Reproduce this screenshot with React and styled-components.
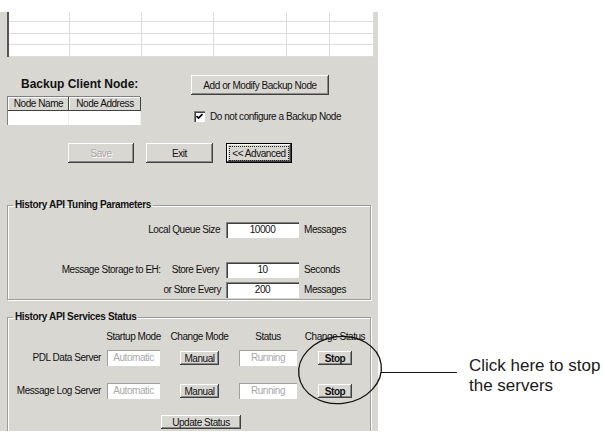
import React from "react";
import styled, { createGlobalStyle } from "styled-components";

const GlobalStyle = createGlobalStyle`
  body {
    margin: 0;
    background: #fff;
    font-family: "Liberation Sans", Arial, sans-serif;
  }
`;

const FACE = "#d9d7d2";

const Page = styled.div`
  position: relative;
  display: flex;
  align-items: flex-start;
  width: 605px;
  height: 435px;
  overflow: hidden;
`;

const Panel = styled.div`
  box-sizing: border-box;
  width: 378px;
  height: 419px;
  margin-top: 12px;
  padding-left: 7px;
  background: ${FACE};
  overflow: hidden;
  font-size: 10px;
  letter-spacing: -0.45px;
  color: #111;
`;

const ListGrid = styled.div`
  display: grid;
  grid-template-columns: 61px 72px 72px 73px 43px 44px;
  grid-template-rows: 10px 12px 11px 12px;
  width: 365px;
  border-left: 2px solid #555;
  box-sizing: border-box;
`;

const ListCell = styled.div`
  background: #fff;
  border-right: 1px solid #dcdcdc;
  border-bottom: 1px solid #dcdcdc;
`;

const Backup = styled.div`
  display: flex;
  align-items: flex-start;
`;

const BackupLeft = styled.div`
  width: 133px;
`;

const BackupTitle = styled.div`
  margin-top: 20px;
  padding-left: 14px;
  font-size: 12px;
  line-height: 15px;
  font-weight: bold;
  letter-spacing: 0;
`;

const NodeTable = styled.div`
  display: grid;
  grid-template-columns: 61px 72px;
  grid-template-rows: 14px 14px;
  margin-top: 4px;
  box-shadow: inset 1px 1px #808080, inset 2px 2px #404040, inset -1px -1px #fff;
  padding: 1px 0 0 1px;
`;

const NodeHead = styled.div`
  display: flex;
  align-items: center;
  justify-content: center;
  background: ${FACE};
  box-shadow: inset -1px -1px #404040, inset 1px 1px #fff;
  line-height: 12px;
`;

const NodeBody = styled.div`
  background: #fff;
  border-right: 1px solid #eee;
`;

const BackupRight = styled.div`
  margin-left: 51px;
  display: flex;
  flex-direction: column;
  align-items: flex-start;
`;

const Button = styled.button`
  box-sizing: border-box;
  display: flex;
  align-items: center;
  justify-content: center;
  width: ${(p) => p.$w}px;
  height: ${(p) => p.$h || 20}px;
  padding: 0;
  border: none;
  background: ${FACE};
  font-family: inherit;
  font-size: 10px;
  letter-spacing: -0.45px;
  font-weight: ${(p) => (p.$bold ? "bold" : "normal")};
  color: ${(p) => (p.disabled ? "#a8a6a2" : "#111")};
  text-shadow: ${(p) => (p.disabled ? "1px 1px #fff" : "none")};
  box-shadow: ${(p) =>
    p.$default
      ? "inset 0 0 0 1px #000, inset -2px -2px #404040, inset 2px 2px #fff, inset -3px -3px #808080"
      : "inset -1px -1px #404040, inset 1px 1px #fff, inset -2px -2px #8a8a8a"};
`;

const Focus = styled.span`
  padding: 1px 2px;
  border: 1px dotted #222;
`;

const CheckRow = styled.label`
  display: flex;
  align-items: center;
  gap: 5px;
  margin-top: 16px;
  margin-left: 3px;
`;

const CheckBox = styled.span`
  display: flex;
  align-items: center;
  justify-content: center;
  width: 11px;
  height: 11px;
  background: #fff;
  box-shadow: inset 1px 1px #808080, inset 2px 2px #404040, inset -1px -1px #fff;
`;

const ButtonRow = styled.div`
  display: flex;
  gap: 12px;
  margin-top: 18px;
  padding-left: 61px;
  & > :last-child {
    margin-left: 1px;
  }
`;

const Group = styled.fieldset`
  box-sizing: border-box;
  width: 364px;
  min-width: 0;
  margin: ${(p) => p.$top}px 0 0;
  padding: 0;
  border: 1px solid #9e9c98;
  box-shadow: inset 1px 1px #fff, 1px 1px #fff;
  height: ${(p) => p.$h}px;
`;

const Legend = styled.legend`
  margin-left: 5px;
  padding: 0 2px;
  font-weight: bold;
  line-height: 12px;
  letter-spacing: -0.35px;
`;

const ParamRow = styled.div`
  display: grid;
  grid-template-columns: 213px 73px 1fr;
  column-gap: 5px;
  align-items: center;
  margin-top: ${(p) => p.$top}px;
  line-height: 12px;
`;

const ParamLabel = styled.div`
  display: flex;
  justify-content: flex-end;
  gap: 11px;
  padding-right: ${(p) => p.$pr || 0}px;
`;

const Field = styled.div`
  box-sizing: border-box;
  display: flex;
  align-items: center;
  justify-content: center;
  width: ${(p) => p.$w}px;
  height: ${(p) => p.$h || 16}px;
  background: #fff;
  color: ${(p) => (p.$disabled ? "#a9a9a9" : "#111")};
  box-shadow: ${(p) =>
    p.$disabled
      ? "inset 1px 1px #a0a0a0, inset -1px -1px #fff"
      : "inset 1px 1px #808080, inset 2px 2px #404040, inset -1px -1px #fff"};
`;

const StatusGrid = styled.div`
  display: grid;
  grid-template-columns: 96px 59px 73px 64px 70px;
  grid-template-rows: 12px 16px 16px;
  row-gap: 7px;
  align-items: center;
  justify-items: center;
  margin-top: 8px;
  line-height: 12px;
`;

const RowLabel = styled.div`
  justify-self: end;
  padding-right: 3px;
`;

const UpdateWrap = styled.div`
  margin-top: 26px;
  padding-left: 153px;
`;

const Callout = styled.div`
  display: flex;
  align-items: flex-start;
  margin: 356px 0 0 3px;
`;

const Leader = styled.div`
  width: 76px;
  height: 1px;
  margin-top: 16px;
  background: #111;
`;

const CalloutText = styled.div`
  margin-left: 12px;
  font-size: 17px;
  line-height: 20px;
  color: #1a1a1a;
`;

const Ring = styled.svg`
  position: absolute;
  left: 296px;
  top: 333px;
  pointer-events: none;
`;

const gridCols = 6;
const gridRows = 4;

const services = [
  { name: "PDL Data Server", top: 0 },
  { name: "Message Log Server", top: 20 },
];

export default function App() {
  return (
    <>
      <GlobalStyle />
      <Page>
        <Panel>
          <ListGrid>
            {Array.from({ length: gridCols * gridRows }).map((_, i) => (
              <ListCell key={i} />
            ))}
          </ListGrid>

          <Backup>
            <BackupLeft>
              <BackupTitle>Backup Client Node:</BackupTitle>
              <NodeTable>
                <NodeHead>Node Name</NodeHead>
                <NodeHead>Node Address</NodeHead>
                <NodeBody />
                <NodeBody />
              </NodeTable>
            </BackupLeft>
            <BackupRight>
              <Button $w={138} style={{ marginTop: 18 }}>
                Add or Modify Backup Node
              </Button>
              <CheckRow>
                <CheckBox>
                  <svg width="7" height="7" viewBox="0 0 7 7">
                    <path d="M0.5 3 L2.5 5 L6.5 1" fill="none" stroke="#000" strokeWidth="1.6" />
                  </svg>
                </CheckBox>
                Do not configure a Backup Node
              </CheckRow>
            </BackupRight>
          </Backup>

          <ButtonRow>
            <Button $w={66} disabled>
              Save
            </Button>
            <Button $w={67}>Exit</Button>
            <Button $w={66} $default>
              <Focus>&lt;&lt; Advanced</Focus>
            </Button>
          </ButtonRow>

          <Group $top={36} $h={101}>
            <Legend>History API Tuning Parameters</Legend>
            <ParamRow $top={11}>
              <ParamLabel $pr={1}>Local Queue Size</ParamLabel>
              <Field $w={73}>10000</Field>
              <span>Messages</span>
            </ParamRow>
            <ParamRow $top={24}>
              <ParamLabel $pr={2}>
                <span>Message Storage to EH:</span>
                <span>Store Every</span>
              </ParamLabel>
              <Field $w={73}>10</Field>
              <span>Seconds</span>
            </ParamRow>
            <ParamRow $top={4}>
              <ParamLabel>or Store Every</ParamLabel>
              <Field $w={73}>200</Field>
              <span>Messages</span>
            </ParamRow>
          </Group>

          <Group $top={11} $h={140}>
            <Legend>History API Services Status</Legend>
            <StatusGrid>
              <div />
              <div>Startup Mode</div>
              <div>Change Mode</div>
              <div>Status</div>
              <div>Change Status</div>

              {services.map((s) => (
                <React.Fragment key={s.name}>
                  <RowLabel style={{ marginTop: s.top }}>{s.name}</RowLabel>
                  <Field $w={53} $h={16} $disabled style={{ marginTop: s.top }}>
                    Automatic
                  </Field>
                  <Button $w={39} $h={14} style={{ marginTop: s.top }}>
                    Manual
                  </Button>
                  <Field $w={58} $h={16} $disabled style={{ marginTop: s.top }}>
                    Running
                  </Field>
                  <Button $w={34} $h={14} $bold style={{ marginTop: s.top }}>
                    Stop
                  </Button>
                </React.Fragment>
              ))}
            </StatusGrid>
            <UpdateWrap>
              <Button $w={80} $h={14}>Update Status</Button>
            </UpdateWrap>
          </Group>
        </Panel>

        <Callout>
          <Leader />
          <CalloutText>
            Click here to stop
            <br />
            the servers
          </CalloutText>
        </Callout>

        <Ring width="90" height="76" viewBox="0 0 90 76">
          <ellipse
            cx="44"
            cy="37"
            rx="41.5"
            ry="33.5"
            fill="none"
            stroke="#111"
            strokeWidth="1.3"
            transform="rotate(-8 44 37)"
          />
        </Ring>
      </Page>
    </>
  );
}
